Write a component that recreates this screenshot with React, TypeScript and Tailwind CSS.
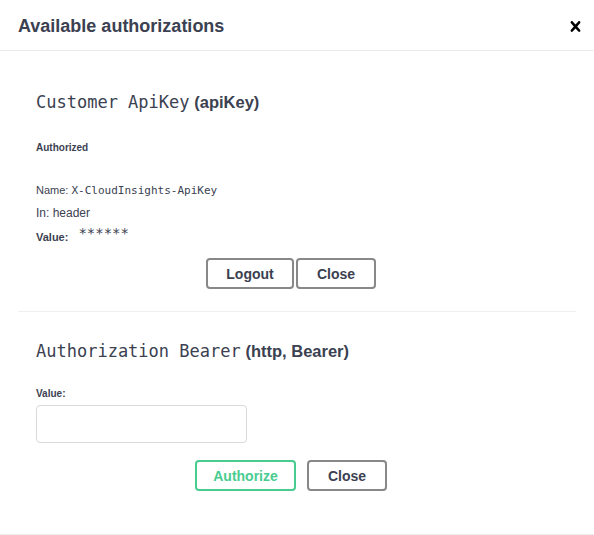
const sans = 'font-["Liberation_Sans",Arial,sans-serif]';
const mono = 'font-["DejaVu_Sans_Mono","Liberation_Mono",monospace]';

const CloseIcon = () => (
  <svg width="21" height="21" viewBox="0 0 20 20" aria-hidden="true">
    <path
      fill="#000"
      d="M14.348 14.849c-.469.469-1.229.469-1.697 0L10 11.819l-2.651 3.029c-.469.469-1.229.469-1.697 0-.469-.469-.469-1.229 0-1.697l2.758-3.15-2.759-3.152c-.469-.469-.469-1.228 0-1.697.469-.469 1.228-.469 1.697 0L10 8.183l2.651-3.031c.469-.469 1.228-.469 1.697 0 .469.469.469 1.229 0 1.697l-2.758 3.152 2.758 3.15c.469.469.469 1.229 0 1.698z"
    />
  </svg>
);

const btn =
  'h-[31px] rounded-[4px] border-2 bg-white text-[14px] font-bold leading-none';

const App = () => {
  return (
    <div className={`${sans} w-[594px] h-[535px] bg-white text-[#3b4151] flex flex-col`}>
      {/* header */}
      <div className="h-[51px] shrink-0 border-b border-[#ebebeb] flex items-center justify-between pl-[18px] pr-[8px]">
        <h3 className="text-[18px] font-bold leading-[22px] mt-[1px]">Available authorizations</h3>
        <button className="mt-[2px]">
          <CloseIcon />
        </button>
      </div>

      <div className="flex-1 px-[18px] border-b border-[#eeeeee]">
        {/* api key */}
        <div className="px-[18px] pb-[22px] border-b border-[#f0f0f0]">
          <h4 className="text-[17px] leading-[20px] mt-[41px]">
            <code className={`${mono} text-[17px]`}>Customer ApiKey</code>{' '}
            <span className="font-bold text-[16.5px]">(apiKey)</span>
          </h4>
          <h6 className="text-[10px] font-bold leading-[12px] mt-[29px]">Authorized</h6>
          <p className="text-[11px] leading-[16px] mt-[28px]">
            Name: <code className={`${mono} text-[11px]`}>X-CloudInsights-ApiKey</code>
          </p>
          <p className="text-[12px] leading-[16px] mt-[6px]">In: header</p>
          <div className="flex items-start h-[22px] mt-[6px]">
            <label className="text-[11px] font-bold leading-[16px] mt-[2px]">Value:</label>
            <code className={`${mono} text-[14px] leading-[16px] ml-[10px] -mt-[2px] text-[#3b4151]`}>******</code>
          </div>
          <div className="flex justify-center gap-[2px] mt-[9px]">
            <button className={`${btn} w-[88px] border-[#888888]`}>Logout</button>
            <button className={`${btn} w-[80px] border-[#888888] mr-[12px]`}>Close</button>
          </div>
        </div>

        {/* bearer */}
        <div className="px-[18px]">
          <h4 className="text-[17px] leading-[20px] mt-[29px]">
            <code className={`${mono} text-[17px]`}>Authorization Bearer</code>{' '}
            <span className="font-bold text-[16.5px]">(http, Bearer)</span>
          </h4>
          <label className="block text-[10px] font-bold leading-[12px] mt-[26px]">Value:</label>
          <input
            type="text"
            className="block w-[211px] h-[38px] mt-[5px] rounded-[4px] border border-[#d9d9d9] bg-white px-[10px] text-[14px] outline-none"
          />
          <div className="flex justify-center gap-[11px] mt-[17px]">
            <button className={`${btn} w-[101px] border-[#49cc90] text-[#49cc90]`}>Authorize</button>
            <button className={`${btn} w-[80px] border-[#888888] mr-[12px]`}>Close</button>
          </div>
        </div>
      </div>
    </div>
  );
};

export default App;
